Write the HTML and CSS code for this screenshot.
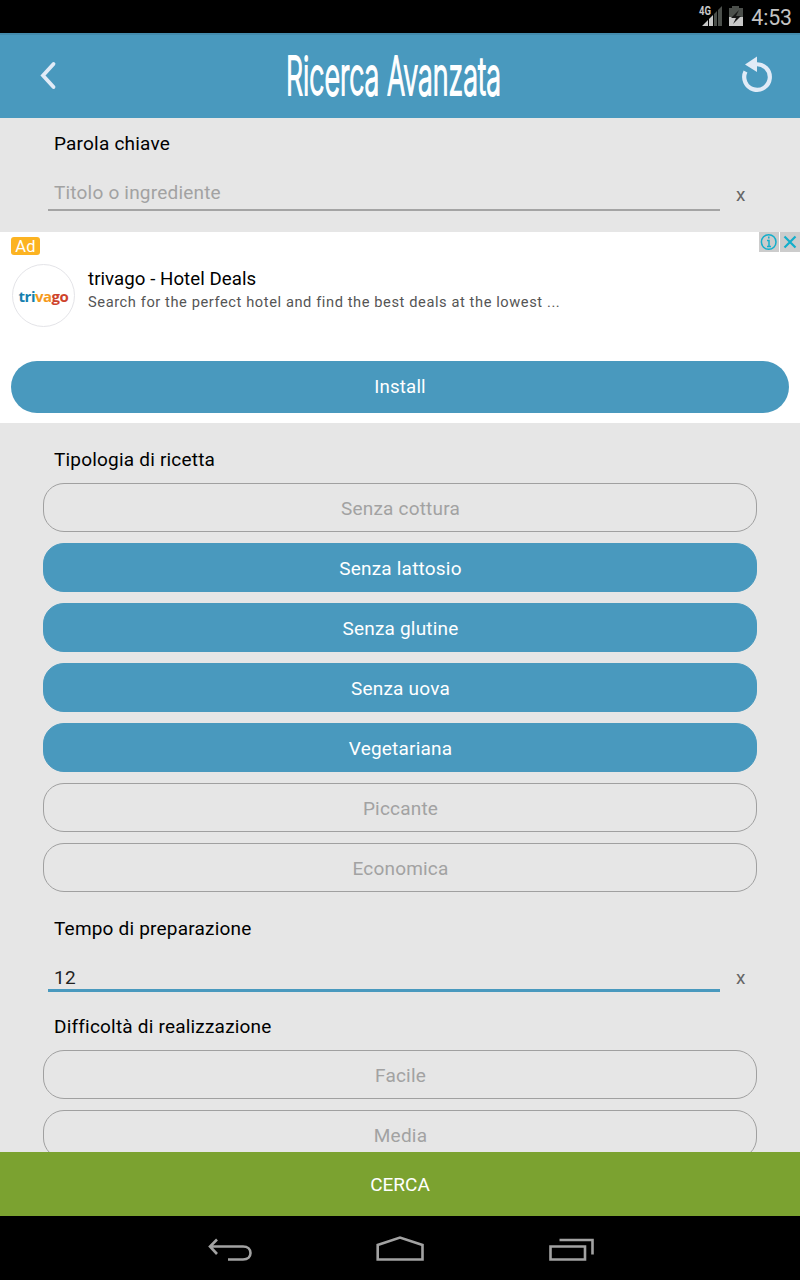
FILE: index.html
```html
<!DOCTYPE html>
<html lang="it">
<head>
<meta charset="utf-8">
<title>Ricerca Avanzata</title>
<link rel="stylesheet" href="styles.css">
</head>
<body>
<div class="status">
  <svg class="status-icons" width="46" height="24" viewBox="0 0 46 24">
    <path d="M3 22L9 16V22ZM10 15L14 11V22H10Z" fill="#c8c8c8"/>
    <path d="M15 10L18 7V22H15ZM19 6L23 2V22H19Z" fill="#4b4f4b"/>
    <text x="0" y="11" class="net" textLength="12" lengthAdjust="spacingAndGlyphs">4G</text>
    <path d="M33 2H40V4H44V13H30V4H33Z" fill="#4b4f4b"/>
    <path d="M30 13H44V22H30Z" fill="#c8c8c8"/>
    <path d="M40 6L32 14H37L34 20L42 12H37Z" fill="#161616"/>
  </svg>
  <span class="clock">4:53</span>
</div>
<header class="header">
  <svg class="back" width="20" height="32" viewBox="0 0 20 32"><path d="M14.500 5L4 16.500L14.500 28" fill="none" stroke="#e1ebf7" stroke-width="3.800" stroke-linecap="round"/></svg>
  <svg class="title" width="220" height="60" viewBox="0 0 220 60"><text x="0" y="50" textLength="215" lengthAdjust="spacingAndGlyphs">Ricerca Avanzata</text></svg>
  <svg class="reset" width="34" height="38" viewBox="0 0 34 38"><path d="M5.500 15.500A12.800 12.800 0 1 0 16 8.300" fill="none" stroke="#e1ebf7" stroke-width="4.200"/><path d="M5 8.500L17 .500V16Z" fill="#e1ebf7"/></svg>
</header>
<main class="main">
  <h2 class="label first">Parola chiave</h2>
  <div class="field"><div class="input hint">Titolo o ingrediente</div><span class="clear">x</span></div>
  <section class="ad">
    <div class="choices"><svg width="41" height="20" viewBox="0 0 41 20"><path d="M0 0H20V20H0ZM21 0H41V20H21Z" fill="#ccc"/><g fill="none" stroke="#13aecb" stroke-width="1.500"><circle cx="9.700" cy="10" r="7.300"/><path d="M9.800 4.500V6.500M8 8.500H10V14.500M8 14.500H12"/><path d="M25.500 4.500L36.500 15.500M36.500 4.500L25.500 15.500" stroke-width="2.200"/></g></svg></div>
    <div class="badge">Ad</div>
    <div class="promo">
      <div class="logo"><span class="tri">tri</span><span class="va">va</span><span class="go">go</span></div>
      <div class="copy"><div class="ad-title">trivago - Hotel Deals</div><div class="ad-desc">Search for the perfect hotel and find the best deals at the lowest ...</div></div>
    </div>
    <div class="install">Install</div>
  </section>
  <h2 class="label kinds">Tipologia di ricetta</h2>
  <div class="options">
    <div class="option">Senza cottura</div>
    <div class="option on">Senza lattosio</div>
    <div class="option on">Senza glutine</div>
    <div class="option on">Senza uova</div>
    <div class="option on">Vegetariana</div>
    <div class="option">Piccante</div>
    <div class="option">Economica</div>
  </div>
  <h2 class="label time">Tempo di preparazione</h2>
  <div class="field"><div class="input active">12</div><span class="clear">x</span></div>
  <h2 class="label level">Difficoltà di realizzazione</h2>
  <div class="options">
    <div class="option">Facile</div>
    <div class="option">Media</div>
  </div>
</main>
<div class="search">CERCA</div>
<nav class="nav">
  <svg width="400" height="64" viewBox="0 0 400 64" fill="none" stroke="#a2a2a2" stroke-width="2.600">
    <path d="M17 23.500L10 30.500L17 38M10 30.500H43C53 30.500 53 43.500 43 43.500H28"/>
    <path d="M177.700 43.500V29L200 21.500L222.500 29V43.500Z"/>
    <path d="M350.500 30.500H385V43.500H350.500ZM359.500 24H392.500V38.500"/>
  </svg>
</nav>
</body>
</html>
```
FILE: styles.css
```css
* { box-sizing: border-box; }
body { margin: 0; width: 800px; height: 1280px; display: flex; flex-direction: column; overflow: hidden; background: #e6e6e6; font-family: Roboto, sans-serif; font-size: 19px; letter-spacing: .2px; color: #000; }
svg { display: block; flex: none; }
.status { height: 33px; flex: none; background: #000; display: flex; align-items: flex-start; justify-content: flex-end; gap: 6px; padding: 4px 8px 0 0; }
.status-icons { overflow: visible; }
.net { font: bold 12px Roboto, sans-serif; letter-spacing: 0; fill: #c8c8c8; stroke: #000; stroke-width: 2px; paint-order: stroke; }
.clock { color: #c4c4c4; font-size: 21.3px; line-height: 28px; letter-spacing: -.1px; }
.header { height: 85px; flex: none; background: #4999be; border-top: 2px solid #438bad; display: flex; align-items: center; padding: 0 26px 3px 39px; }
.title { margin-left: 227px; overflow: visible; }
.title text { font-family: Inter, sans-serif; font-size: 53px; font-weight: 300; fill: #fff; stroke: #fff; stroke-width: 1.8px; letter-spacing: 0; }
.reset { margin-left: auto; }
.main { height: 1034px; flex: none; overflow: hidden; }
.label { margin: 0; padding-left: 54px; font-size: 19px; font-weight: 400; line-height: 24px; }
.first { padding-top: 14px; }
.field { display: flex; align-items: flex-start; padding-left: 48px; margin-top: 19px; }
.input { width: 672px; height: 36px; padding-left: 6px; line-height: 35px; border-bottom: 2px solid #a4a4a4; color: #222; }
.hint { color: #a2a2a2; }
.active { border-bottom: 3px solid #4999be; height: 37px; line-height: 45px; }
.clear { margin-left: 16px; line-height: 40px; color: #666; }
.ad { height: 191px; margin-top: 17px; background: #fff; position: relative; padding: 5px 11px 0; }
.choices { position: absolute; top: 0; right: 0; }
.badge { width: 29px; height: 18px; border-radius: 3px; background: #fcb322; color: #fff; font-size: 16.5px; line-height: 19px; text-align: center; }
.promo { display: flex; gap: 13px; margin: 9px 0 0 1px; height: 97px; }
.logo { width: 63px; height: 63px; border: 1px solid #e4e4e8; border-radius: 50%; display: flex; align-items: center; justify-content: center; font: bold 15px "Open Sans", sans-serif; letter-spacing: -.5px; }
.tri { color: #167fae; }
.va { color: #f69a1c; }
.go { color: #ce432b; }
.copy { padding-top: 3px; }
.ad-title { font-size: 18.67px; line-height: 24px; letter-spacing: .05px; }
.ad-desc { font-size: 14.67px; line-height: 22px; color: #555; letter-spacing: .58px; }
.install { height: 52px; border-radius: 26px; background: #4999be; color: #fff; font-size: 18.67px; line-height: 52px; text-align: center; }
.kinds { margin-top: 25px; }
.options { display: flex; flex-direction: column; gap: 11px; padding: 11px 43px 0; }
.option { height: 49px; flex: none; border: 1px solid #a0a0a0; border-radius: 21px; padding-left: 1px; line-height: 49px; text-align: center; color: #a2a2a2; }
.on { background: #4999be; border-color: #4999be; color: #fff; }
.time { margin-top: 25px; }
.time + .field { margin-top: 14px; }
.active + .clear { line-height: 46px; height: 37px; }
.level { margin-top: 23px; }
.search { height: 64px; flex: none; background: #7ba230; color: #fff; line-height: 65px; text-align: center; letter-spacing: 0; }
.nav { height: 64px; flex: none; background: #000; display: flex; justify-content: center; }
```
